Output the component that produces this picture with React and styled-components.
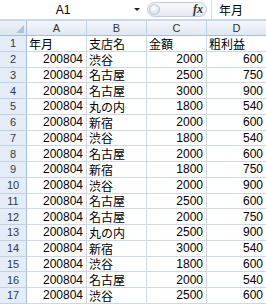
import React from "react";
import styled, { createGlobalStyle } from "styled-components";

const GlobalStyle = createGlobalStyle`
  html, body {
    margin: 0;
    padding: 0;
    background: #ffffff;
    overflow: hidden;
  }
`;

const rows = [
  ["年月", "支店名", "金額", "粗利益"],
  ["200804", "渋谷", "2000", "600"],
  ["200804", "名古屋", "2500", "750"],
  ["200804", "名古屋", "3000", "900"],
  ["200804", "丸の内", "1800", "540"],
  ["200804", "新宿", "2000", "600"],
  ["200804", "渋谷", "1800", "540"],
  ["200804", "名古屋", "2000", "600"],
  ["200804", "新宿", "1800", "750"],
  ["200804", "渋谷", "2000", "900"],
  ["200804", "名古屋", "2500", "600"],
  ["200804", "名古屋", "2000", "750"],
  ["200804", "丸の内", "2500", "900"],
  ["200804", "新宿", "3000", "540"],
  ["200804", "渋谷", "1800", "600"],
  ["200804", "名古屋", "2000", "540"],
  ["200804", "渋谷", "2500", "600"],
];

const Sheet = styled.div`
  width: 266px;
  height: 307px;
  overflow: hidden;
  font-family: "Liberation Sans", "Noto Sans CJK JP", sans-serif;
`;

const FormulaBar = styled.div`
  display: flex;
  align-items: center;
  height: 19px;
  background: #ffffff;
  border-bottom: 2px solid #c9d8ec;
`;

const NameBox = styled.div`
  position: relative;
  width: 142px;
  height: 19px;
  padding-right: 16px;
  box-sizing: border-box;
  display: flex;
  align-items: center;
  justify-content: center;
  font-size: 12px;
  color: #000;
`;

const DropArrow = styled.span`
  position: absolute;
  right: 2px;
  top: 8px;
  width: 0;
  height: 0;
  border-left: 3px solid transparent;
  border-right: 3px solid transparent;
  border-top: 3px solid #222;
`;

const FxButton = styled.div`
  display: flex;
  align-items: center;
  justify-content: space-between;
  margin-left: 5px;
  width: 60px;
  height: 15px;
  border-radius: 8px;
  background: linear-gradient(#f7f9fc, #e3e8ef);
  border: 1px solid #c3cbd6;
  box-sizing: border-box;
  padding: 0 3px 0 1px;
`;

const Knob = styled.span`
  width: 11px;
  height: 11px;
  border-radius: 50%;
  background: radial-gradient(circle at 40% 35%, #ffffff, #cfd6df);
  border: 1px solid #b9c3cf;
  box-sizing: border-box;
`;

const Fx = styled.span`
  font-family: "Liberation Serif", serif;
  font-style: italic;
  font-weight: bold;
  font-size: 12px;
  color: #333;
`;

const Formula = styled.div`
  flex: 1;
  height: 19px;
  display: flex;
  align-items: center;
  margin-left: 4px;
  padding-left: 7px;
  border-left: 1px solid #d5dce6;
  font-family: "Noto Sans CJK JP", sans-serif;
  font-size: 12px;
  color: #000;
`;

const Grid = styled.div`
  display: grid;
  grid-template-columns: 27px 60px 60px 60px 60px;
  grid-auto-rows: 15.75px;
  grid-template-rows: 15px;
`;

const Corner = styled.div`
  position: relative;
  background: linear-gradient(#eef2f8, #dde5f0);
  border-right: 1px solid #a9bdd5;
  border-bottom: 1px solid #a9bdd5;
  box-sizing: border-box;

  &::after {
    content: "";
    position: absolute;
    right: 2px;
    bottom: 2px;
    width: 0;
    height: 0;
    border-left: 8px solid transparent;
    border-bottom: 8px solid #b7c3d1;
  }
`;

const ColHead = styled.div`
  display: flex;
  align-items: center;
  justify-content: center;
  background: linear-gradient(#f3f6fb, #e0e8f2);
  border-right: 1px solid #c3d0e0;
  border-bottom: 1px solid #a9bdd5;
  box-sizing: border-box;
  font-size: 11px;
  color: #333;
`;

const RowHead = styled.div`
  display: flex;
  align-items: center;
  justify-content: center;
  background: #e4ecf7;
  border-right: 1px solid #a9bdd5;
  border-bottom: 1px solid #c3d0e0;
  box-sizing: border-box;
  font-size: 11px;
  color: #2f3a4a;
`;

const Cell = styled.div`
  display: flex;
  align-items: center;
  justify-content: ${(p) => (p.$num ? "flex-end" : "flex-start")};
  padding: ${(p) => (p.$num ? "0 3px 0 0" : "0 0 0 2px")};
  border-right: 1px solid #d0d7e5;
  border-bottom: 1px solid #d0d7e5;
  box-sizing: border-box;
  font-family: ${(p) =>
    p.$num
      ? '"Liberation Sans", sans-serif'
      : '"Noto Sans CJK JP", sans-serif'};
  font-size: 12px;
  color: #000;
  white-space: nowrap;
  overflow: hidden;
`;

const App = () => {
  return (
    <Sheet>
      <GlobalStyle />
      <FormulaBar>
        <NameBox>
          A1
          <DropArrow />
        </NameBox>
        <FxButton>
          <Knob />
          <Fx>fx</Fx>
        </FxButton>
        <Formula>年月</Formula>
      </FormulaBar>
      <Grid>
        <Corner />
        {["A", "B", "C", "D"].map((c) => (
          <ColHead key={c}>{c}</ColHead>
        ))}
        {rows.map((r, i) => (
          <React.Fragment key={i}>
            <RowHead>{i + 1}</RowHead>
            {r.map((v, j) => (
              <Cell key={j} $num={/^\d+$/.test(v)}>
                {v}
              </Cell>
            ))}
          </React.Fragment>
        ))}
      </Grid>
    </Sheet>
  );
};

export default App;
